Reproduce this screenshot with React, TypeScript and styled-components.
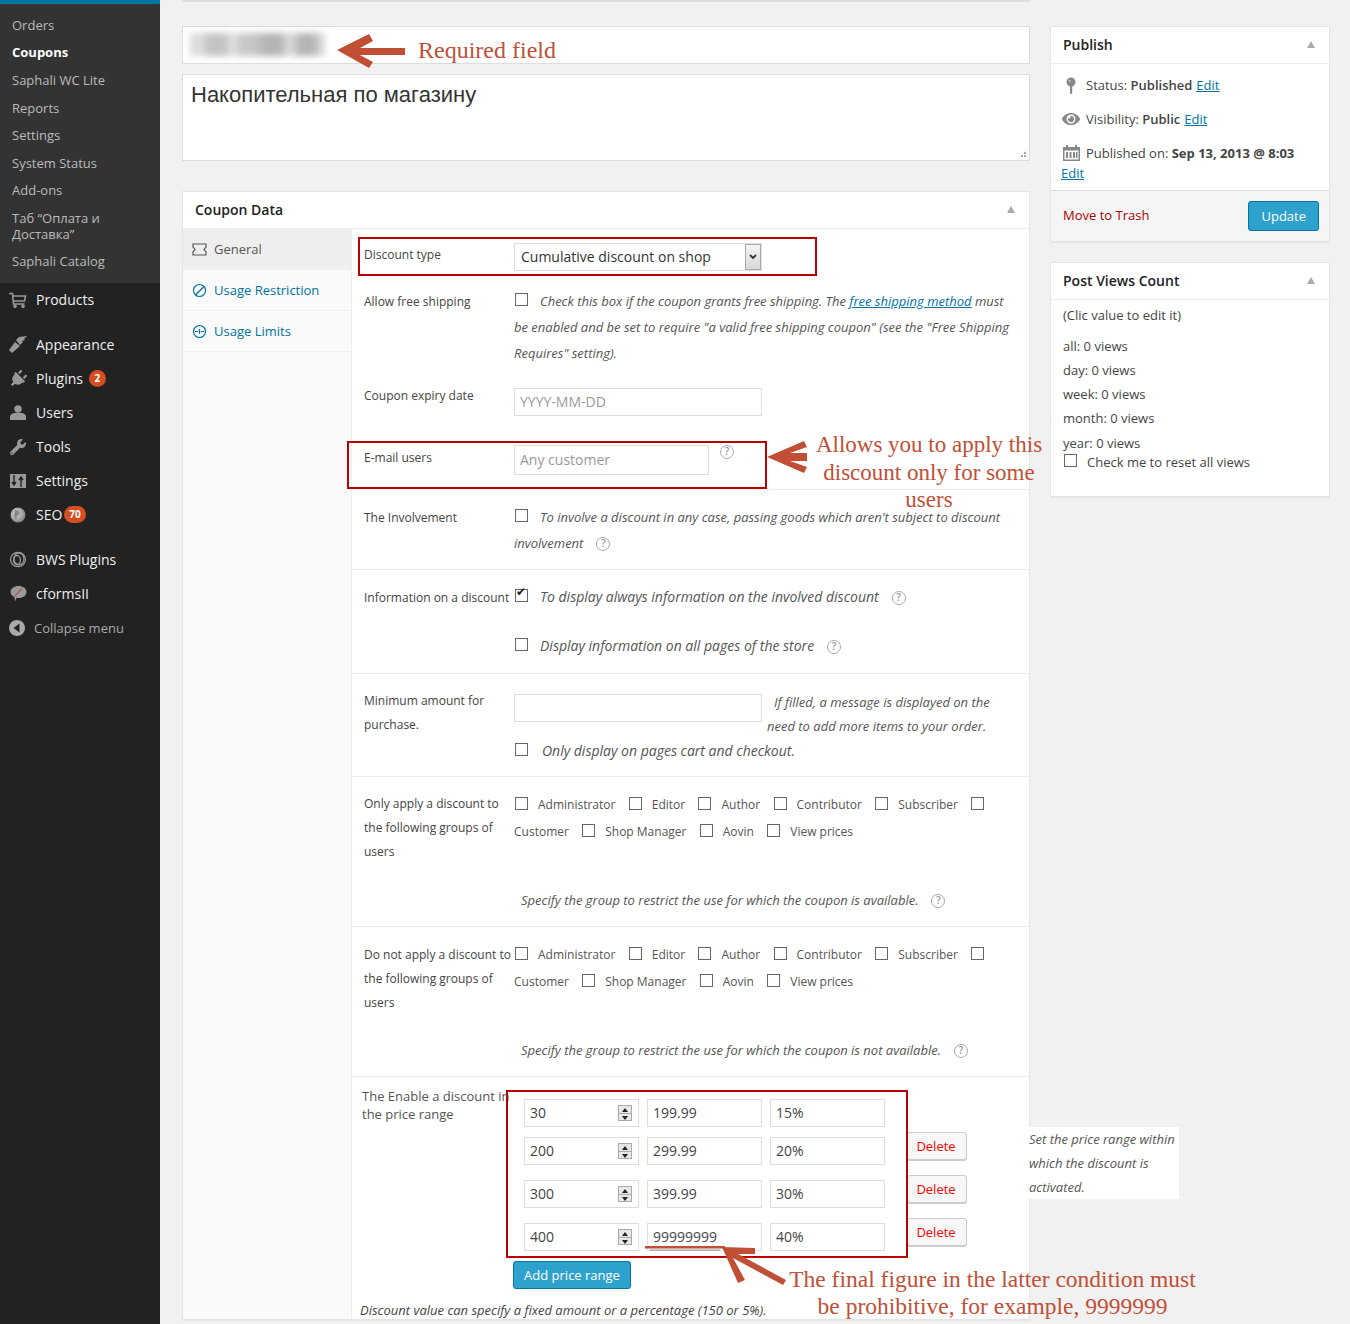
import React, { FunctionComponent } from 'react'
import styled, { createGlobalStyle } from 'styled-components'
import { FaEye, FaPlug, FaWrench } from 'react-icons/fa'

const GlobalStyle = createGlobalStyle`
  html, body {
    margin: 0;
    padding: 0;
    background: #f1f1f1;
  }
  body {
    font-family: "Open Sans", "Liberation Sans", sans-serif;
    font-size: 13px;
    color: #444;
  }
  * {
    box-sizing: border-box;
  }
`

const Page = styled.div`
  display: flex;
  position: relative;
  width: 1350px;
  height: 1324px;
  overflow: hidden;
  background: #f1f1f1;
`

/* admin menu */

const Sidebar = styled.nav`
  flex: 0 0 160px;
  background: #222;
  border-top: 4px solid #0074a2;
`

const SubMenu = styled.ul`
  list-style: none;
  margin: 0;
  padding: 7px 0 8px;
  background: #333;
`

const SubItem = styled.li<{ $active?: boolean }>`
  padding: ${p => (p.$active ? '5px 12px 6.5px' : '6px 12px 5.5px')};
  font-size: 13px;
  line-height: 16px;
  color: ${p => (p.$active ? '#fff' : '#bbb')};
  font-weight: ${p => (p.$active ? 700 : 400)};
`

const MainMenu = styled.ul<{ $gap?: number }>`
  list-style: none;
  margin: 0;
  padding: 0;
  padding-top: ${p => p.$gap || 0}px;
`

const MenuItem = styled.li`
  display: flex;
  align-items: center;
  height: 34px;
  font-size: 14px;
  color: #eee;
`

const MenuIcon = styled.span`
  flex: 0 0 36px;
  display: flex;
  justify-content: center;
  color: #999;
  svg {
    display: block;
  }
`

const PlugIcon = styled(FaPlug)`
  transform: rotate(45deg);
`

const Badge = styled.span<{ $wide?: boolean }>`
  display: inline-block;
  margin-left: ${p => (p.$wide ? 2 : 6)}px;
  min-width: 17px;
  height: 17px;
  padding: 0 5px;
  border-radius: 9px;
  background: #d54e21;
  color: #fff;
  font-size: 10px;
  font-weight: 700;
  line-height: 17px;
  text-align: center;
`

const CollapseItem = styled(MenuItem)`
  color: #aaa;
  font-size: 13px;
`

const CollapseIcon = styled(MenuIcon)`
  flex: 0 0 34px;
`

/* main area */

const Content = styled.main`
  flex: 1;
  display: flex;
  gap: 20px;
  padding-left: 22px;
`

const MainColumn = styled.div`
  flex: 0 0 848px;
`

const SideColumn = styled.aside`
  flex: 0 0 280px;
  padding-top: 26px;
`

const TopEdge = styled.div`
  height: 2px;
  border-bottom: 2px solid #ddd;
  margin-bottom: 24px;
`

const TitleBox = styled.div`
  height: 38px;
  padding: 6px 7px;
  background: #fff;
  border: 1px solid #ddd;
`

const BlurredTitle = styled.div`
  width: 136px;
  height: 23px;
  filter: blur(3px);
  background: linear-gradient(
    90deg,
    #ddd 0 8%,
    #c4c4c4 14% 26%,
    #e4e4e4 31%,
    #c8c8c8 38% 46%,
    #b4b4b4 56% 66%,
    #ddd 73%,
    #b4b4b4 82% 90%,
    #ececec 100%
  );
`

const DescriptionBox = styled.div`
  position: relative;
  height: 87px;
  margin-top: 10px;
  padding: 5px 8px;
  background: #fff;
  border: 1px solid #ddd;
  font-family: "Liberation Sans", Arial, sans-serif;
  font-size: 22px;
  line-height: 30px;
  color: #333;
`

const ResizeHandle = styled.span`
  position: absolute;
  right: 2px;
  bottom: 2px;
  width: 9px;
  height: 9px;
  background: radial-gradient(circle at 1px 1px, #aaa 1px, transparent 1.2px) 0 0 / 3px 3px;
  clip-path: polygon(100% 0, 100% 100%, 0 100%);
`

const PostBox = styled.section`
  background: #fff;
  border: 1px solid #e5e5e5;
  box-shadow: 0 1px 1px rgba(0, 0, 0, 0.04);
`

const CouponBox = styled(PostBox)`
  height: 1129px;
  margin-top: 30px;
`

const BoxHeader = styled.header`
  display: flex;
  justify-content: space-between;
  align-items: center;
  height: 37px;
  padding: 0 12px 2px;
  border-bottom: 1px solid #eee;
  font-size: 14px;
  font-weight: 600;
  color: #222;
`

const Caret = styled.span`
  width: 0;
  height: 0;
  margin-right: 2px;
  border-left: 4.5px solid transparent;
  border-right: 4.5px solid transparent;
  border-bottom: 7px solid #aaa;
`

const CouponBody = styled.div`
  display: flex;
  height: 1090px;
`

const Tabs = styled.ul`
  flex: 0 0 169px;
  list-style: none;
  margin: 0;
  padding: 0;
  background: #fafafa;
  border-right: 1px solid #eee;
`

const Tab = styled.li<{ $active?: boolean }>`
  display: flex;
  align-items: center;
  gap: 7px;
  height: 41px;
  padding-left: 9px;
  border-bottom: 1px solid #f0f0f0;
  background: ${p => (p.$active ? '#eee' : 'transparent')};
  color: ${p => (p.$active ? '#555' : '#0074a2')};
  font-size: 13px;
  svg {
    flex: none;
  }
`

const Panel = styled.div`
  flex: 1;
  min-width: 0;
`

const Row = styled.div<{ $h: number; $line?: boolean }>`
  display: flex;
  height: ${p => p.$h}px;
  padding-left: 12px;
  border-bottom: ${p => (p.$line ? '1px solid #eee' : '0')};
`

const Label = styled.div<{ $top: number }>`
  flex: 0 0 150px;
  padding-top: ${p => p.$top}px;
  font-size: 12px;
  line-height: 24px;
  color: #444;
`

const Field = styled.div<{ $top: number }>`
  flex: 1;
  min-width: 0;
  padding-top: ${p => p.$top}px;
  padding-right: 12px;
  font-size: 13px;
  line-height: 26px;
  color: #555;
`

const Hint = styled.em<{ $size?: number }>`
  font-style: italic;
  font-size: ${p => p.$size || 13}px;
`

const HintLink = styled.a`
  color: #0074a2;
  text-decoration: underline;
`

const Spaced = styled.div<{ $top?: number }>`
  margin-top: ${p => p.$top || 0}px;
`

const Check = styled.input.attrs({ type: 'checkbox', readOnly: true })<{ $after?: number }>`
  appearance: none;
  position: relative;
  display: inline-block;
  width: 13px;
  height: 13px;
  margin: 0 ${p => (p.$after === undefined ? 10 : p.$after)}px 0 1px;
  vertical-align: 0;
  background: #fff;
  border: 1px solid #666;
  &:checked::before {
    content: '✔';
    position: absolute;
    left: 0;
    top: -6px;
    font-family: "DejaVu Sans", sans-serif;
    font-size: 12px;
    line-height: 16px;
    color: #222;
  }
`

const GroupCheck = styled(Check)`
  vertical-align: -1px;
`

const TextBox = styled.input.attrs({ readOnly: true })<{ $w: number; $h?: number }>`
  display: block;
  flex: none;
  width: ${p => p.$w}px;
  height: ${p => p.$h || 28}px;
  padding: 0 5px 2px;
  background: #fff;
  border: 1px solid #ddd;
  font: 14px "Open Sans", sans-serif;
  color: #444;
  &::placeholder {
    color: #999;
  }
`

const FakeSelect = styled.div`
  display: flex;
  align-items: center;
  justify-content: space-between;
  width: 248px;
  height: 28px;
  padding-left: 6px;
  border: 1px solid #ddd;
  font-size: 14px;
  color: #333;
`

const SelectArrow = styled.span`
  display: flex;
  align-items: center;
  justify-content: center;
  width: 16px;
  height: 26px;
  background: linear-gradient(#f4f4f4, #d8d8d8);
  border: 1px solid #aaa;
  color: #333;
`

const Help = styled.span<{ $left?: number }>`
  display: inline-block;
  width: 14px;
  height: 14px;
  margin-left: ${p => p.$left || 0}px;
  border: 1.5px solid #aaa;
  border-radius: 50%;
  font-family: "Open Sans", sans-serif;
  font-size: 10px;
  font-style: normal;
  font-weight: 600;
  line-height: 11px;
  text-align: center;
  color: #999;
  vertical-align: 1px;
`

const InlineHelpRow = styled.div`
  display: flex;
  align-items: flex-start;
  gap: 11px;
  line-height: 30px;
`

const MinimumRow = styled.div`
  display: flex;
  line-height: 24px;
`

const MinimumHint = styled.div`
  padding-left: 5px;
  margin-top: -4px;
  white-space: nowrap;
`

const MinimumIndent = styled.span`
  display: inline-block;
  width: 7px;
`

const GroupName = styled.span`
  margin-right: 12.3px;
  white-space: nowrap;
  font-size: 12px;
`

const GroupNote = styled.div`
  margin-top: 42px;
  padding-left: 7px;
`

/* price ranges */

const PriceSection = styled.div`
  position: relative;
  height: 243px;
`

const PriceMain = styled.div`
  display: flex;
  padding-top: 10px;
  height: 224px;
`

const PriceLabel = styled.div`
  flex: 0 0 162px;
  padding-left: 10px;
  font-size: 13px;
  line-height: 18px;
  color: #555;
`

const PriceRows = styled.div`
  padding-top: 12px;
`

const PriceRow = styled.div<{ $gap: number }>`
  display: flex;
  gap: 8px;
  height: 28px;
  margin-bottom: ${p => p.$gap}px;
  margin-left: 10px;
`

const NumberBox = styled.div`
  display: flex;
  align-items: center;
  justify-content: space-between;
  width: 115px;
  height: 28px;
  padding: 0 6px 2px 5px;
  border: 1px solid #ddd;
  font-size: 14px;
  color: #444;
`

const Spinner = styled.span`
  display: flex;
  flex-direction: column;
  width: 14px;
  height: 16px;
  margin-top: 2px;
  border: 1px solid #aaa;
  background: #e8e8e8;
`

const SpinStep = styled.span<{ $down?: boolean }>`
  flex: 1;
  position: relative;
  &::before {
    content: '';
    position: absolute;
    left: 3px;
    top: 2px;
    border-left: 3px solid transparent;
    border-right: 3px solid transparent;
    ${p => (p.$down ? 'border-top: 4px solid #222;' : 'border-bottom: 4px solid #222;')}
  }
  ${p => (p.$down ? 'border-top: 1px solid #aaa;' : '')}
`

const DeleteButton = styled.button`
  width: 60px;
  height: 28px;
  margin: -5px 0 0 14px;
  padding: 0 2px 0 0;
  background: #f7f7f7;
  border: 1px solid #ccc;
  border-radius: 3px;
  box-shadow: 0 1px 0 #ccc;
  font: 13px "Open Sans", sans-serif;
  color: #f00;
`

const BlueButton = styled.button`
  height: 30px;
  padding: 0 12px;
  background: #2ea2cc;
  border: 1px solid #0074a2;
  border-radius: 3px;
  font: 13px "Open Sans", sans-serif;
  color: #fff;
`

const AddButton = styled(BlueButton)`
  display: block;
  width: 118px;
  height: 28px;
  margin-left: -1px;
  padding: 0;
`

const PriceNote = styled.div`
  padding-left: 8px;
  font-size: 13px;
  font-style: italic;
  line-height: 18px;
  color: #444;
`

const PriceHelp = styled.div`
  position: absolute;
  left: 677px;
  top: 50px;
  width: 150px;
  height: 72px;
  background: #fff;
  font-size: 13px;
  font-style: italic;
  line-height: 24px;
  color: #555;
`

/* side boxes */

const MiscRow = styled.div`
  display: flex;
  align-items: center;
  padding-left: 10px;
  height: 34px;
  line-height: 20px;
`

const MiscIcon = styled.span`
  display: flex;
  justify-content: center;
  flex: 0 0 20px;
  margin-right: 5px;
  color: #888;
`

const MiscStrong = styled.strong`
  font-weight: 600;
`

const EditLink = styled.a`
  margin-left: 4px;
  color: #0074a2;
  text-decoration: underline;
`

const BareEdit = styled(EditLink)`
  display: block;
  margin: -7px 0 0 10px;
  line-height: 20px;
`

const MiscList = styled.div`
  height: 126px;
  padding-top: 4px;
`

const PublishFooter = styled.footer`
  display: flex;
  align-items: center;
  justify-content: space-between;
  height: 51px;
  padding: 0 10px 0 12px;
  background: #f5f5f5;
  border-top: 1px solid #ddd;
`

const TrashLink = styled.a`
  margin-bottom: 2px;
  color: #a00;
`

const ViewsBox = styled(PostBox)`
  height: 235px;
  margin-top: 20px;
`

const ViewsBody = styled.div`
  padding: 5px 12px;
  line-height: 20px;
`

const ViewLine = styled.div<{ $h: number }>`
  height: ${p => p.$h}px;
`

const ViewCheck = styled.label`
  display: block;
`

/* annotations drawn over the screenshot */

const RedFrame = styled.div<{ $x: number; $y: number; $w: number; $h: number }>`
  position: absolute;
  left: ${p => p.$x}px;
  top: ${p => p.$y}px;
  width: ${p => p.$w}px;
  height: ${p => p.$h}px;
  border: 2px solid #b00;
  pointer-events: none;
`

const Note = styled.div<{ $x: number; $y: number; $w: number; $lh: number; $size: number }>`
  position: absolute;
  left: ${p => p.$x}px;
  top: ${p => p.$y}px;
  width: ${p => p.$w}px;
  font-family: "Liberation Serif", "Times New Roman", serif;
  font-size: ${p => p.$size}px;
  line-height: ${p => p.$lh}px;
  text-align: center;
  color: #c14f36;
  white-space: nowrap;
`

const ArrowLayer = styled.svg`
  position: absolute;
  left: 0;
  top: 0;
  pointer-events: none;
`

const CartIcon = () => (
  <svg width="18" height="16" viewBox="0 0 18 16" fill="none" stroke="#999" strokeWidth="1.6">
    <path d="M0 1.5h3.5l1 10.5h11" />
    <path d="M4 4h12.5l-1 5H5" />
    <circle cx="6" cy="14.3" r="1" />
    <circle cx="14" cy="14.3" r="1" />
  </svg>
)

const BrushIcon = () => (
  <svg width="18" height="17" viewBox="0 0 18 17" fill="#999">
    <path d="M0 14l6-8 5 4-8 7z" />
    <path d="M7 4l3-3 8-1-3 3 1 1-3 1 1 1-3 3z" />
  </svg>
)

const UserIcon = () => (
  <svg width="16" height="16" viewBox="0 0 16 16" fill="#999">
    <circle cx="8" cy="4" r="3.7" />
    <path d="M0 15v-3c0-2.500 2.500-4 5-4h6c2.500 0 5 1.500 5 4v3z" />
  </svg>
)

const SlidersIcon = () => (
  <svg width="16" height="14" viewBox="0 0 16 14">
    <rect width="16" height="14" fill="#999" />
    <path d="M4 1v9M2 8l2 3 2-3M11 13V4M9 6l2-3 2 3" stroke="#222" strokeWidth="1.4" fill="none" />
  </svg>
)

const GlobeIcon = () => (
  <svg width="16" height="16" viewBox="0 0 16 16">
    <defs>
      <radialGradient id="globe" cx="0.4" cy="0.4" r="0.7">
        <stop offset="0" stopColor="#ddd" />
        <stop offset="1" stopColor="#777" />
      </radialGradient>
    </defs>
    <circle cx="8" cy="8" r="7.5" fill="url(#globe)" />
    <path d="M5 3l4 1 1 3-3 2-1 4-2-4z" fill="#888" />
  </svg>
)

const RingsIcon = () => (
  <svg width="18" height="17" viewBox="0 0 18 17" fill="none" stroke="#999" strokeWidth="1.3">
    <ellipse cx="9" cy="8.5" rx="7.5" ry="7" />
    <ellipse cx="10" cy="8" rx="5" ry="5.8" />
    <ellipse cx="8" cy="9" rx="3.4" ry="4.5" />
  </svg>
)

const BubbleIcon = () => (
  <svg width="17" height="17" viewBox="0 0 17 17">
    <path d="M8.5 1c4.5 0 8 2.6 8 6s-3.500 6-8 6c-.8 0-1.400 0-2-.2L5 16.500l-.6-4.500C2 11 .5 9 .5 7c0-3.400 3.500-6 8-6z" fill="#999" />
    <path d="M12 3.500L5 11" stroke="#a33" strokeWidth="1" />
  </svg>
)

const CollapseGlyph = () => (
  <svg width="16" height="16" viewBox="0 0 16 16">
    <circle cx="8" cy="8" r="8" fill="#aaa" />
    <path d="M10.500 3.500v9L4.500 8z" fill="#222" />
  </svg>
)

const TicketIcon = () => (
  <svg width="15" height="13" viewBox="0 0 15 13" fill="none" stroke="#555" strokeWidth="1.2">
    <path d="M1 1h13v3l-2 2.500 2 2.500v3H1V9l2-2.500L1 4z" />
  </svg>
)

const BanIcon = () => (
  <svg width="15" height="15" viewBox="0 0 15 15" fill="none" stroke="#0074a2" strokeWidth="1.2">
    <circle cx="7.500" cy="7.500" r="6" />
    <path d="M3.500 12L12 3.500" />
  </svg>
)

const LimitsIcon = () => (
  <svg width="15" height="15" viewBox="0 0 15 15" fill="none" stroke="#0074a2" strokeWidth="1.2">
    <circle cx="7.500" cy="7.500" r="6" />
    <path d="M3 7.500h3.200M12 7.500H8.800M7.500 5v5" />
  </svg>
)

const PinIcon = () => (
  <svg width="10" height="17" viewBox="0 0 10 17" fill="#888">
    <circle cx="5" cy="5" r="4.500" />
    <rect x="4" y="8" width="2.200" height="9" rx="1" />
    <circle cx="3.800" cy="3.800" r="1" fill="#ccc" />
  </svg>
)

const CalendarIcon = () => (
  <svg width="17" height="16" viewBox="0 0 17 16" fill="#888">
    <path d="M0 2h3V0h2v2h7V0h2v2h3v14H0zM1.500 5.500v9h14v-9z" fillRule="evenodd" />
    <path d="M3 7h2v6H3zM6.500 7h2v6h-2zM10 7h2v6h-2zM13 7h1.500v6H13z" />
  </svg>
)

const ChevronIcon = () => (
  <svg width="8" height="6" viewBox="0 0 8 6" fill="none" stroke="#333" strokeWidth="1.800">
    <path d="M1 1l3 3 3-3" />
  </svg>
)

const SUB_ITEMS = ['Orders', 'Coupons', 'Saphali WC Lite', 'Reports', 'Settings', 'System Status', 'Add-ons', 'Таб “Оплата и Доставка”', 'Saphali Catalog']
const GROUPS = ['Administrator', 'Editor', 'Author', 'Contributor', 'Subscriber', 'Customer', 'Shop Manager', 'Aovin', 'View prices']
const VIEWS: [string, number][] = [['all: 0 views', 24], ['day: 0 views', 24], ['week: 0 views', 24], ['month: 0 views', 25], ['year: 0 views', 19]]
const PRICES = [
  { from: '30', to: '199.99', value: '15%', gap: 10 },
  { from: '200', to: '299.99', value: '20%', gap: 15, del: true },
  { from: '300', to: '399.99', value: '30%', gap: 15, del: true },
  { from: '400', to: '99999999', value: '40%', gap: 10, del: true }
]

const GroupRow: FunctionComponent<{ label: string; note: string; labelTop: number }> = ({ label, note, labelTop }) => (
  <Row $h={150} $line>
    <Label $top={labelTop}>{label}</Label>
    <Field $top={14}>
      {GROUPS.map(g => (
        <React.Fragment key={g}>
          <GroupCheck />
          <GroupName>{g}</GroupName>
        </React.Fragment>
      ))}
      <GroupNote><Hint>{note}</Hint><Help $left={13}>?</Help></GroupNote>
    </Field>
  </Row>
)

export default function App() {
  return (
    <Page>
      <GlobalStyle />
      <Sidebar>
        <SubMenu>
          {SUB_ITEMS.map(item => <SubItem key={item} $active={item === 'Coupons'}>{item}</SubItem>)}
        </SubMenu>
        <MainMenu>
          <MenuItem><MenuIcon><CartIcon /></MenuIcon>Products</MenuItem>
        </MainMenu>
        <MainMenu $gap={11}>
          <MenuItem><MenuIcon><BrushIcon /></MenuIcon>Appearance</MenuItem>
          <MenuItem><MenuIcon><PlugIcon size={18} /></MenuIcon>Plugins<Badge>2</Badge></MenuItem>
          <MenuItem><MenuIcon><UserIcon /></MenuIcon>Users</MenuItem>
          <MenuItem><MenuIcon><FaWrench size={16} /></MenuIcon>Tools</MenuItem>
          <MenuItem><MenuIcon><SlidersIcon /></MenuIcon>Settings</MenuItem>
          <MenuItem><MenuIcon><GlobeIcon /></MenuIcon>SEO<Badge $wide>70</Badge></MenuItem>
        </MainMenu>
        <MainMenu $gap={11}>
          <MenuItem><MenuIcon><RingsIcon /></MenuIcon>BWS Plugins</MenuItem>
          <MenuItem><MenuIcon><BubbleIcon /></MenuIcon>cformsII</MenuItem>
          <CollapseItem><CollapseIcon><CollapseGlyph /></CollapseIcon>Collapse menu</CollapseItem>
        </MainMenu>
      </Sidebar>

      <Content>
        <MainColumn>
          <TopEdge />
          <TitleBox><BlurredTitle /></TitleBox>
          <DescriptionBox>
            Накопительная по магазину
            <ResizeHandle />
          </DescriptionBox>

          <CouponBox>
            <BoxHeader>Coupon Data<Caret /></BoxHeader>
            <CouponBody>
              <Tabs>
                <Tab $active><TicketIcon />General</Tab>
                <Tab><BanIcon />Usage Restriction</Tab>
                <Tab><LimitsIcon />Usage Limits</Tab>
              </Tabs>
              <Panel>
                <Row $h={47}>
                  <Label $top={14}>Discount type</Label>
                  <Field $top={14}>
                    <FakeSelect>Cumulative discount on shop<SelectArrow><ChevronIcon /></SelectArrow></FakeSelect>
                  </Field>
                </Row>
                <Row $h={94}>
                  <Label $top={14}>Allow free shipping</Label>
                  <Field $top={12}>
                    <Check $after={12} />
                    <Hint>
                      Check this box if the coupon grants free shipping. The <HintLink>free shipping method</HintLink> must be enabled and be set to require "a valid free shipping coupon" (see the "Free Shipping Requires" setting).
                    </Hint>
                  </Field>
                </Row>
                <Row $h={62}>
                  <Label $top={14}>Coupon expiry date</Label>
                  <Field $top={18}><TextBox $w={248} placeholder="YYYY-MM-DD" /></Field>
                </Row>
                <Row $h={58} $line>
                  <Label $top={14}>E-mail users</Label>
                  <Field $top={13}>
                    <InlineHelpRow>
                      <TextBox $w={195} $h={30} placeholder="Any customer" />
                      <Help>?</Help>
                    </InlineHelpRow>
                  </Field>
                </Row>
                <Row $h={80} $line>
                  <Label $top={16}>The Involvement</Label>
                  <Field $top={14}>
                    <Check $after={12} />
                    <Hint>To involve a discount in any case, passing goods which aren't subject to discount involvement</Hint>
                    <Help $left={13}>?</Help>
                  </Field>
                </Row>
                <Row $h={104} $line>
                  <Label $top={16}>Information on a discount</Label>
                  <Field $top={14}>
                    <Check $after={12} defaultChecked />
                    <Hint $size={14}>To display always information on the involved discount</Hint>
                    <Help $left={13}>?</Help>
                    <Spaced $top={23}>
                      <Check $after={12} />
                      <Hint $size={14}>Display information on all pages of the store</Hint>
                      <Help $left={13}>?</Help>
                    </Spaced>
                  </Field>
                </Row>
                <Row $h={103} $line>
                  <Label $top={15}>Minimum amount for purchase.</Label>
                  <Field $top={20}>
                    <MinimumRow>
                      <TextBox $w={248} />
                      <MinimumHint>
                        <MinimumIndent />
                        <Hint>If filled, a message is displayed on the<br />need to add more items to your order.</Hint>
                      </MinimumHint>
                    </MinimumRow>
                    <Check $after={14} />
                    <Hint $size={14}>Only display on pages cart and checkout.</Hint>
                  </Field>
                </Row>
                <GroupRow labelTop={15} label="Only apply a discount to the following groups of users" note="Specify the group to restrict the use for which the coupon is available." />
                <GroupRow labelTop={16} label="Do not apply a discount to the following groups of users" note="Specify the group to restrict the use for which the coupon is not available." />
                <PriceSection>
                  <PriceMain>
                    <PriceLabel>The Enable a discount in the price range</PriceLabel>
                    <PriceRows>
                      {PRICES.map(p => (
                        <PriceRow key={p.from} $gap={p.gap}>
                          <NumberBox>
                            {p.from}
                            <Spinner><SpinStep /><SpinStep $down /></Spinner>
                          </NumberBox>
                          <TextBox $w={115} value={p.to} />
                          <TextBox $w={115} value={p.value} />
                          {p.del ? <DeleteButton>Delete</DeleteButton> : null}
                        </PriceRow>
                      ))}
                      <AddButton>Add price range</AddButton>
                    </PriceRows>
                  </PriceMain>
                  <PriceNote>Discount value can specify a fixed amount or a percentage (150 or 5%).</PriceNote>
                  <PriceHelp>Set the price range within which the discount is activated.</PriceHelp>
                </PriceSection>
              </Panel>
            </CouponBody>
          </CouponBox>
        </MainColumn>

        <SideColumn>
          <PostBox>
            <BoxHeader>Publish<Caret /></BoxHeader>
            <MiscList>
              <MiscRow><MiscIcon><PinIcon /></MiscIcon>Status:&nbsp;<MiscStrong>Published</MiscStrong><EditLink>Edit</EditLink></MiscRow>
              <MiscRow><MiscIcon><FaEye size={18} /></MiscIcon>Visibility:&nbsp;<MiscStrong>Public</MiscStrong><EditLink>Edit</EditLink></MiscRow>
              <MiscRow><MiscIcon><CalendarIcon /></MiscIcon>Published on:&nbsp;<b>Sep 13, 2013 @ 8:03</b></MiscRow>
              <BareEdit>Edit</BareEdit>
            </MiscList>
            <PublishFooter>
              <TrashLink>Move to Trash</TrashLink>
              <BlueButton>Update</BlueButton>
            </PublishFooter>
          </PostBox>
          <ViewsBox>
            <BoxHeader>Post Views Count<Caret /></BoxHeader>
            <ViewsBody>
              <ViewLine $h={31}>(Clic value to edit it)</ViewLine>
              {VIEWS.map(([text, h]) => <ViewLine key={text} $h={h}>{text}</ViewLine>)}
              <ViewCheck><Check $after={10} />Check me to reset all views</ViewCheck>
            </ViewsBody>
          </ViewsBox>
        </SideColumn>
      </Content>

      <RedFrame $x={358} $y={237} $w={459} $h={39} />
      <RedFrame $x={347} $y={441} $w={420} $h={48} />
      <RedFrame $x={506} $y={1090} $w={402} $h={168} />

      <ArrowLayer width="1350" height="1324" viewBox="0 0 1350 1324">
        <path fill="#c14f36" d="M337 50L369 34l4 7-13 7h45v7H360l13 7-4 6z" />
        <path fill="#c14f36" d="M767 457l37-16 3 6-17 6h17v8h-17l17 6-3 6z" />
        <rect x="650" y="1249" width="70" height="2" fill="rgba(0,0,0,.2)" />
        <path fill="#c14f36" d="M645 1246h80v2.500h-80z" />
        <path fill="#c14f36" d="M722 1247l33 1v6H738l48 26-3 5-50-27 12 22-7 3z" />
      </ArrowLayer>

      <Note $x={417} $y={36} $w={140} $lh={28} $size={24}>Required field</Note>
      <Note $x={809} $y={431} $w={240} $lh={27.5} $size={23}>
        Allows you to apply this<br />discount only for some<br />users
      </Note>
      <Note $x={780} $y={1266} $w={425} $lh={27} $size={23.5}>
        The final figure in the latter condition must<br />be prohibitive, for example, 9999999
      </Note>
    </Page>
  )
}
